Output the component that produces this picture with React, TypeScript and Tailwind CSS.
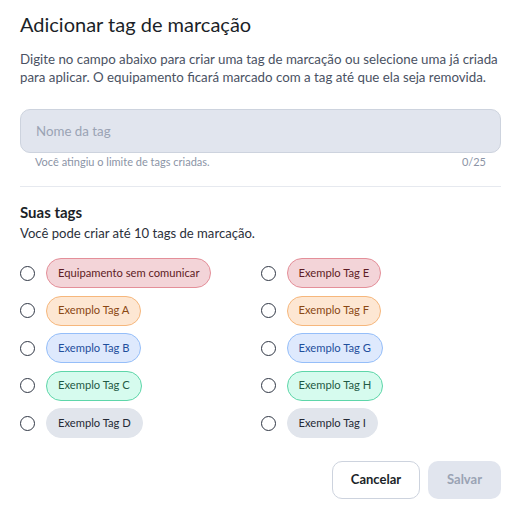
const tags = [
  { label: 'Equipamento sem comunicar', cls: 'bg-[#f3d4d8] border-[#e48f99] text-[#5e1c25]' },
  { label: 'Exemplo Tag E', cls: 'bg-[#f3d4d8] border-[#e48f99] text-[#5e1c25]' },
  { label: 'Exemplo Tag A', cls: 'bg-[#fde7d3] border-[#f6b77c] text-[#8a4814]' },
  { label: 'Exemplo Tag F', cls: 'bg-[#fde7d3] border-[#f6b77c] text-[#8a4814]' },
  { label: 'Exemplo Tag B', cls: 'bg-[#dee9fd] border-[#95bef9] text-[#1f4f9c]' },
  { label: 'Exemplo Tag G', cls: 'bg-[#dee9fd] border-[#95bef9] text-[#1f4f9c]' },
  { label: 'Exemplo Tag C', cls: 'bg-[#d6fbee] border-[#5ed6a9] text-[#1f5a45]' },
  { label: 'Exemplo Tag H', cls: 'bg-[#d6fbee] border-[#5ed6a9] text-[#1f5a45]' },
  { label: 'Exemplo Tag D', cls: 'bg-[#e1e5ec] border-[#e1e5ec] text-[#252a36]' },
  { label: 'Exemplo Tag I', cls: 'bg-[#e1e5ec] border-[#e1e5ec] text-[#252a36]' },
];

export default function App() {
  return (
    <div className="w-[519px] h-[507px] bg-white pl-5 pr-[18px] pt-[10px] font-['Lato','Noto_Sans',sans-serif] text-[#1b1f28]">
      <h1 className="text-[20px] leading-[28px] text-[#1b1f28]">Adicionar tag de marcação</h1>
      <p className="mt-[12px] text-[13.3px] leading-[18px] text-[#4a5263]">
        Digite no campo abaixo para criar uma tag de marcação ou selecione uma já criada para aplicar. O equipamento ficará marcado com a tag até que ela seja removida.
      </p>
      <input
        disabled
        placeholder="Nome da tag"
        className="mt-[23px] w-[481px] h-[44px] rounded-[10px] border border-[#cdd3de] bg-[#e1e5ee] px-[15px] text-[13.3px] placeholder:text-[#9aa3b4] outline-none"
      />
      <div className="flex justify-between w-[481px] px-[15px] mt-[1px] text-[11px] leading-[16px] text-[#8b94a6]">
        <span>Você atingiu o limite de tags criadas.</span>
        <span>0/25</span>
      </div>
      <div className="mt-[16px] w-[481px] h-px bg-[#e6e9ef]" />
      <h2 className="mt-[15px] text-[15px] leading-[20px] font-bold text-[#1b1f28]">Suas tags</h2>
      <p className="mt-[2px] text-[13.1px] leading-[18px] text-[#2b303b]">Você pode criar até 10 tags de marcação.</p>
      <div className="mt-[16px] w-[481px] grid grid-cols-2 gap-y-[7.5px]">
        {tags.map((t) => (
          <label key={t.label} className="flex items-center gap-[11px]">
            <span className="w-[15px] h-[15px] rounded-full border-[1.5px] border-[#303745]" />
            <span className={`h-[30px] px-[11px] flex items-center rounded-full border text-[11.2px] ${t.cls}`}>{t.label}</span>
          </label>
        ))}
      </div>
      <div className="mt-[23px] flex justify-end gap-2">
        <button className="h-[38px] w-[88px] rounded-[10px] border border-[#cdd3de] bg-white text-[13px] font-bold text-[#1b1f28]">Cancelar</button>
        <button className="h-[38px] w-[73px] rounded-[10px] bg-[#e1e5ee] text-[13px] text-[#9aa3b4] font-bold">Salvar</button>
      </div>
    </div>
  );
}
